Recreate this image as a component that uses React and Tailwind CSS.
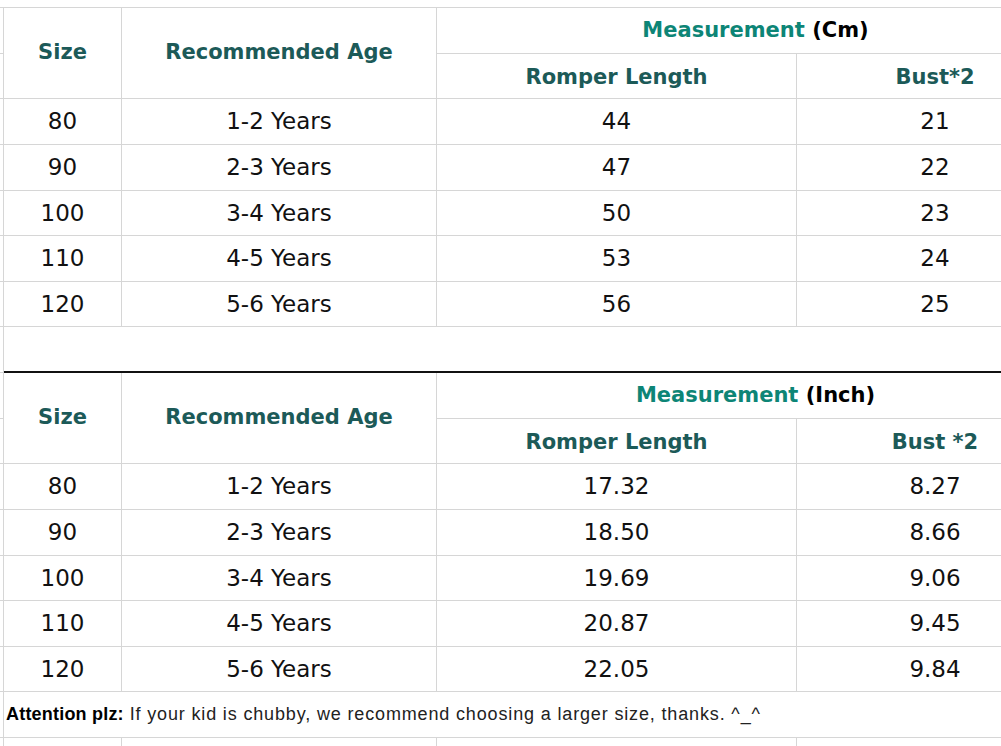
const cm = [
  ["80", "1-2 Years", "44", "21"],
  ["90", "2-3 Years", "47", "22"],
  ["100", "3-4 Years", "50", "23"],
  ["110", "4-5 Years", "53", "24"],
  ["120", "5-6 Years", "56", "25"],
];

const inch = [
  ["80", "1-2 Years", "17.32", "8.27"],
  ["90", "2-3 Years", "18.50", "8.66"],
  ["100", "3-4 Years", "19.69", "9.06"],
  ["110", "4-5 Years", "20.87", "9.45"],
  ["120", "5-6 Years", "22.05", "9.84"],
];

const line = "border-[#d6d6d6]";
const cell = `flex items-center justify-center border-b border-r ${line}`;
const head = "font-bold text-[21px] text-[#1c5a58]";
const data = "text-[23px] text-[#111]";

function Stub() {
  return <div className={`border-b border-r ${line}`} />;
}

function Header({ unit, bust }) {
  return (
    <>
      <Stub />
      <div className={`${cell} row-span-2 ${head}`}>Size</div>
      <div className={`${cell} row-span-2 ${head}`}>Recommended Age</div>
      <div className={`${cell} col-span-2 border-r-0 text-[21px] font-bold`}>
        <span className="text-[#0d8576]">Measurement</span>
        <span className="text-black">&nbsp;({unit})</span>
      </div>
      <Stub />
      <div className={`${cell} pt-[3px] ${head}`}>Romper Length</div>
      <div className={`${cell} pt-[3px] ${head}`}>{bust}</div>
    </>
  );
}

function Rows({ rows }) {
  return rows.map((r) => (
    <div key={r[0]} className="contents">
      <Stub />
      {r.map((v, i) => (
        <div key={i} className={`${cell} ${data}`}>
          {v}
        </div>
      ))}
    </div>
  ));
}

export default function App() {
  return (
    <div className="w-[1001px] h-[746px] overflow-hidden bg-white" style={{ fontFamily: '"DejaVu Sans", sans-serif' }}>
      <div className="grid w-[1074px] grid-cols-[4px_118px_315px_360px_277px] grid-rows-[8px_46px_45px_46px_46px_45px_46px_45px_46px_46px_45px_46px_46px_45px_46px_45px_46px_20px]">
        <div className={`col-span-5 border-b ${line}`} />

        <Header unit="Cm" bust="Bust*2" />
        <Rows rows={cm} />

        <Stub />
        <div className="col-span-4 border-b-2 border-[#111]" />

        <Header unit="Inch" bust="Bust *2" />
        <Rows rows={inch} />

        <Stub />
        <div
          className={`col-span-4 flex items-center border-b ${line} pl-[2px] text-[18px] text-black`}
          style={{ fontFamily: '"Liberation Sans", Arial, sans-serif' }}
        >
          <span className="font-bold tracking-[0.2px]">Attention plz:</span>
          <span className="text-[#222] tracking-[0.85px]">&nbsp;If your kid is chubby, we recommend choosing a larger size, thanks. ^_^</span>
        </div>

        <Stub />
        <div className={`border-r ${line}`} />
        <div className={`border-r ${line}`} />
        <div className={`border-r ${line}`} />
        <div />
      </div>
    </div>
  );
}
